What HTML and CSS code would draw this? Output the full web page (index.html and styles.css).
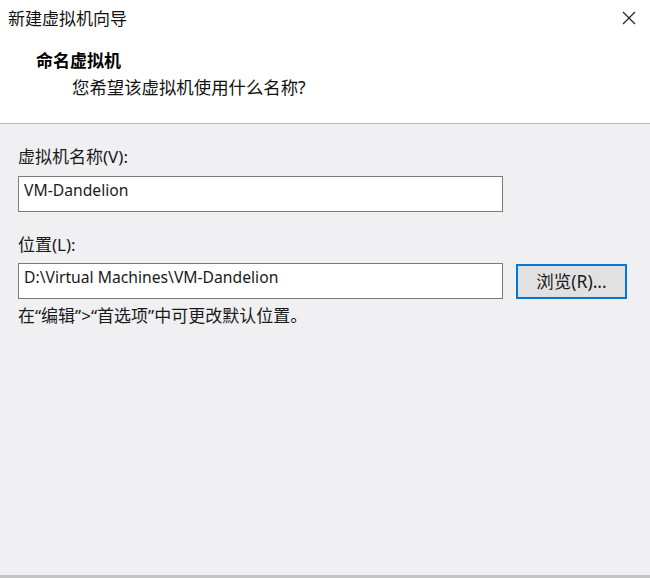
FILE: index.html
```html
<!DOCTYPE html>
<html lang="zh-CN">
<head>
<meta charset="utf-8">
<title>新建虚拟机向导</title>
<link rel="stylesheet" href="styles.css">
</head>
<body>
<div class="window">
  <div class="header">
    <div class="titlebar">
      <span class="title">新建虚拟机向导</span>
      <span class="close" aria-label="关闭">
        <svg width="14" height="14" viewBox="0 0 14 14"><path d="M1 1 L13 13 M13 1 L1 13" stroke="#222" stroke-width="1.2" fill="none"/></svg>
      </span>
    </div>
    <div class="heading">命名虚拟机</div>
    <div class="subheading">您希望该虚拟机使用什么名称?</div>
  </div>
  <div class="content">
    <div class="label label-first">虚拟机名称(V):</div>
    <div class="input">VM-Dandelion</div>
    <div class="label label-second">位置(L):</div>
    <div class="row">
      <div class="input input-grow">D:\Virtual Machines\VM-Dandelion</div>
      <div class="button">浏览(R)...</div>
    </div>
    <div class="hint">在“编辑”&gt;“首选项”中可更改默认位置。</div>
  </div>
</div>
</body>
</html>
```

FILE: styles.css
```css
html, body {
  margin: 0;
  padding: 0;
}
body {
  font-family: "Noto Sans", "Noto Sans CJK SC", sans-serif;
  color: #1a1a1a;
  background: #f0f0f0;
}
.window {
  width: 650px;
  height: 578px;
  display: flex;
  flex-direction: column;
  box-sizing: border-box;
  border-bottom: 3px solid #c4c4c4;
  background: #f0f0f2;
}
.header {
  background: #ffffff;
  height: 123px;
  border-bottom: 1px solid #b9b9b9;
  box-sizing: content-box;
}
.titlebar {
  height: 36px;
  display: flex;
  align-items: center;
  justify-content: space-between;
  padding-left: 8px;
  padding-right: 14px;
}
.title {
  font-size: 17px;
  line-height: 36px;
  padding-top: 2px;
  color: #111;
}
.close {
  display: flex;
  width: 14px;
  height: 14px;
}
.heading {
  margin-top: 13px;
  padding-left: 36px;
  font-size: 17px;
  font-weight: bold;
  line-height: 24px;
  color: #000;
}
.subheading {
  margin-top: 2px;
  padding-left: 72px;
  font-size: 17.4px;
  line-height: 24px;
  color: #111;
}
.content {
  flex: 1;
  padding: 21px 22px 0 18px;
}
.label {
  font-size: 17px;
  line-height: 24px;
}
.label-second {
  margin-top: 21px;
}
.input {
  margin-top: 7px;
  width: 485px;
  height: 36px;
  box-sizing: border-box;
  border: 1px solid #7a7a7a;
  background: #ffffff;
  font-size: 15.7px;
  line-height: 27px;
  padding-left: 5px;
  white-space: nowrap;
}
.row {
  margin-top: 6px;
  display: flex;
  align-items: flex-start;
  gap: 13px;
}
.row .input {
  margin-top: 0;
}
.button {
  margin-top: 1px;
  width: 111px;
  height: 35px;
  box-sizing: border-box;
  border: 2px solid #0078d7;
  background: #e1e1e1;
  font-size: 17.5px;
  line-height: 30px;
  text-align: center;
}
.hint {
  margin-top: 5px;
  font-size: 17px;
  line-height: 24px;
}
```
